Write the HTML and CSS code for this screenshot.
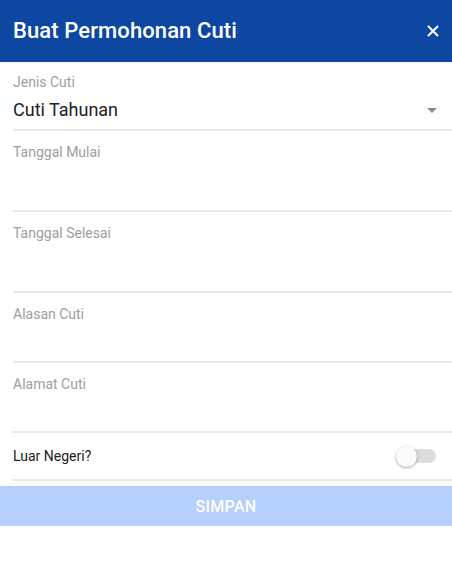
FILE: index.html
```html
<!DOCTYPE html>
<html lang="id">
<head>
<meta charset="utf-8">
<title>Buat Permohonan Cuti</title>
<link rel="stylesheet" href="styles.css">
</head>
<body>
<header class="bar">
  <h1 class="bar-title">Buat Permohonan Cuti</h1>
  <button class="close" aria-label="Tutup">
    <svg width="12" height="12" viewBox="0 0 12 12"><path d="M1 1 L11 11 M11 1 L1 11" stroke="#fff" stroke-width="2" fill="none"/></svg>
  </button>
</header>
<form class="form">
  <div class="field field-select">
    <label class="label">Jenis Cuti</label>
    <div class="select-row">
      <span class="value">Cuti Tahunan</span>
      <svg class="caret" width="10" height="5" viewBox="0 0 10 5"><path d="M0 0 H10 L5 5 Z" fill="#8a8a8a"/></svg>
    </div>
  </div>
  <div class="field field-tall"><label class="label">Tanggal Mulai</label></div>
  <div class="field field-tall"><label class="label">Tanggal Selesai</label></div>
  <div class="field field-short"><label class="label">Alasan Cuti</label></div>
  <div class="field field-short"><label class="label">Alamat Cuti</label></div>
  <div class="field toggle-row">
    <span class="toggle-label">Luar Negeri?</span>
    <span class="switch"><span class="track"></span><span class="knob"></span></span>
  </div>
  <button type="button" class="submit">SIMPAN</button>
</form>
</body>
</html>
```
FILE: styles.css
```css
* { box-sizing: border-box; }
html, body { margin: 0; padding: 0; background: #fff; }
body { font-family: Roboto, "Noto Sans", sans-serif; color: #212121; }

.bar {
  height: 62px;
  background: #0e47a1;
  display: flex;
  align-items: center;
  justify-content: space-between;
  padding: 0 13px;
}
.bar-title {
  margin: 0;
  color: #fff;
  font-size: 22px;
  font-weight: 500;
  line-height: 26px;
  letter-spacing: 0.1px;
}
.close {
  background: none;
  border: 0;
  padding: 0;
  width: 12px;
  height: 12px;
  display: flex;
}

.form { display: flex; flex-direction: column; }

.field {
  margin-left: 13px;
  border-bottom: 2px solid #e7e7e7;
  padding-top: 13px;
}
.label {
  display: block;
  font-size: 14px;
  line-height: 16px;
  color: #9e9e9e;
}
.field-select { height: 69px; padding-top: 12px; }
.select-row {
  margin-top: 8px;
  display: flex;
  align-items: center;
  justify-content: space-between;
  padding-right: 15px;
  height: 24px;
}
.value { font-size: 18px; line-height: 24px; color: #212121; }
.caret { display: block; }
.field-tall { height: 81px; }
.field-short { height: 70px; }

.toggle-row {
  height: 48px;
  padding-top: 0;
  display: flex;
  align-items: center;
  justify-content: space-between;
  padding-right: 16px;
}
.toggle-label { font-size: 14px; line-height: 16px; color: #212121; }
.switch {
  position: relative;
  width: 40px;
  height: 21px;
  display: flex;
  align-items: center;
  justify-content: flex-end;
}
.track {
  width: 36px;
  height: 14px;
  border-radius: 7px;
  background: #dcdcdc;
}
.knob {
  position: absolute;
  left: 0;
  top: 0;
  width: 21px;
  height: 21px;
  border-radius: 50%;
  background: #fafafa;
  box-shadow: 0 1px 3px rgba(0,0,0,0.35);
}

.submit {
  margin-top: 5px;
  height: 40px;
  border: 0;
  background: #b5d0fc;
  color: #fff;
  font-family: Roboto, "Noto Sans", sans-serif;
  font-size: 16px;
  font-weight: 500;
  letter-spacing: 0.3px;
  box-shadow: 0 2px 2px rgba(0,0,0,0.12);
}
```
